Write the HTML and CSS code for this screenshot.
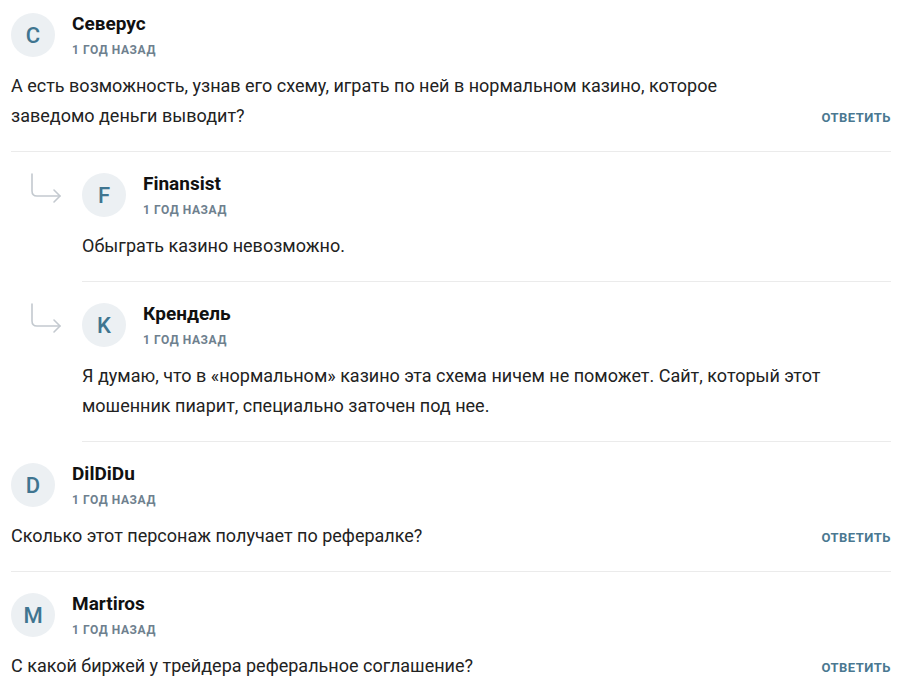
FILE: index.html
```html
<!DOCTYPE html>
<html lang="ru">
<head>
<meta charset="utf-8">
<title>Комментарии</title>
<link rel="stylesheet" href="styles.css">
</head>
<body>
<div class="comments">
  <div class="comment first">
    <div class="head">
      <div class="avatar">C</div>
      <div class="meta">
        <div class="name">Северус</div>
        <div class="date">1 год назад</div>
      </div>
    </div>
    <div class="body">
      <p class="text">А есть возможность, узнав его схему, играть по ней в нормальном казино, которое заведомо деньги выводит?</p>
      <a class="reply">Ответить</a>
    </div>
  </div>

  <div class="child">
    <svg class="arrow" width="32" height="32" viewBox="0 0 32 32" fill="none" stroke="#c3c9cf" stroke-width="1.6" stroke-linecap="round" stroke-linejoin="round">
      <path d="M1 1 V18 Q1 23 6 23 H29"/>
      <path d="M23 17 L29 23 L23 29"/>
    </svg>
    <div class="comment">
      <div class="head">
        <div class="avatar">F</div>
        <div class="meta">
          <div class="name">Finansist</div>
          <div class="date">1 год назад</div>
        </div>
      </div>
      <div class="body">
        <p class="text">Обыграть казино невозможно.</p>
      </div>
    </div>
  </div>

  <div class="child">
    <svg class="arrow" width="32" height="32" viewBox="0 0 32 32" fill="none" stroke="#c3c9cf" stroke-width="1.6" stroke-linecap="round" stroke-linejoin="round">
      <path d="M1 1 V18 Q1 23 6 23 H29"/>
      <path d="M23 17 L29 23 L23 29"/>
    </svg>
    <div class="comment">
      <div class="head">
        <div class="avatar">K</div>
        <div class="meta">
          <div class="name">Крендель</div>
          <div class="date">1 год назад</div>
        </div>
      </div>
      <div class="body">
        <p class="text">Я думаю, что в «нормальном» казино эта схема ничем не поможет. Сайт, который этот мошенник пиарит, специально заточен под нее.</p>
      </div>
    </div>
  </div>

  <div class="comment">
    <div class="head">
      <div class="avatar">D</div>
      <div class="meta">
        <div class="name">DilDiDu</div>
        <div class="date">1 год назад</div>
      </div>
    </div>
    <div class="body">
      <p class="text">Сколько этот персонаж получает по рефералке?</p>
      <a class="reply">Ответить</a>
    </div>
  </div>

  <div class="comment">
    <div class="head">
      <div class="avatar">M</div>
      <div class="meta">
        <div class="name">Martiros</div>
        <div class="date">1 год назад</div>
      </div>
    </div>
    <div class="body">
      <p class="text">С какой биржей у трейдера реферальное соглашение?</p>
      <a class="reply">Ответить</a>
    </div>
  </div>
</div>
</body>
</html>
```

FILE: styles.css
```css
html, body {
  margin: 0;
  padding: 0;
  background: #ffffff;
}

body {
  font-family: Roboto, "Liberation Sans", sans-serif;
  color: #222222;
}

.comments {
  padding: 0 11px;
}

.comment {
  padding: 21px 0 20px;
  border-bottom: 1px solid #ebebeb;
}

.comment.first {
  padding-top: 13px;
}

.child {
  display: flex;
  align-items: flex-start;
}

.child .arrow {
  flex: none;
  width: 32px;
  height: 32px;
  margin: 21px 19px 0 20px;
}

.child .comment {
  flex: 1;
}

.head {
  display: flex;
  align-items: flex-start;
  gap: 17px;
  height: 44px;
}

.avatar {
  width: 44px;
  height: 44px;
  border-radius: 50%;
  background: #ecf0f3;
  color: #3f7590;
  font-size: 22px;
  font-weight: 500;
  display: flex;
  align-items: center;
  justify-content: center;
  flex: none;
}

.meta {
  display: flex;
  flex-direction: column;
}

.name {
  font-size: 19px;
  line-height: 22px;
  font-weight: 700;
  color: #111111;
}

.date {
  margin-top: 7px;
  font-size: 12px;
  line-height: 16px;
  font-weight: 700;
  text-transform: uppercase;
  letter-spacing: 0.6px;
  color: #6e808e;
}

.body {
  display: flex;
  align-items: last baseline;
  gap: 24px;
  margin-top: 14px;
}

.text {
  flex: 1;
  margin: 0;
  font-size: 18px;
  line-height: 30px;
  color: #222222;
}

.reply {
  flex: none;
  font-size: 13px;
  line-height: 16px;
  font-weight: 700;
  text-transform: uppercase;
  letter-spacing: 0.5px;
  color: #4a7891;
  cursor: pointer;
}
```
